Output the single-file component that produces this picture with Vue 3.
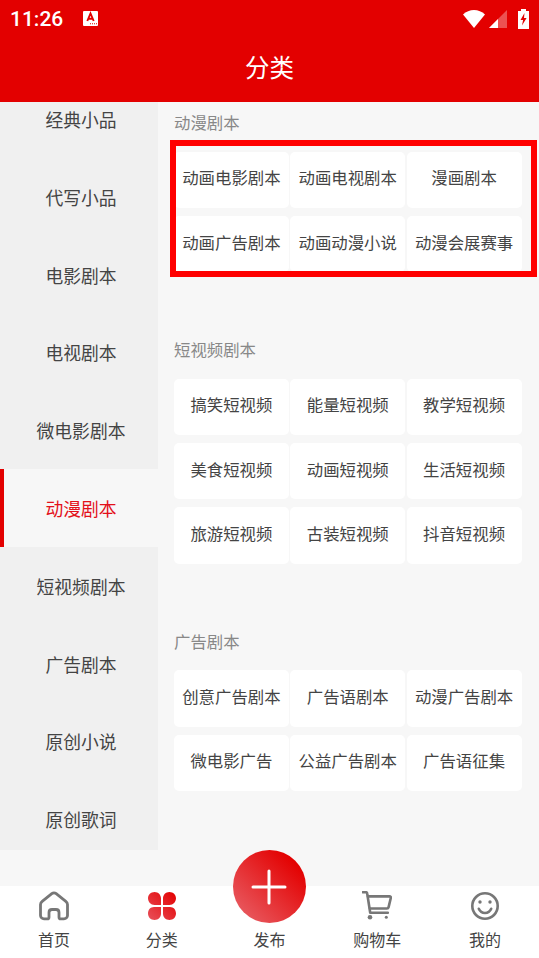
<script setup>
const menus = ["经典小品", "代写小品", "电影剧本", "电视剧本", "微电影剧本", "动漫剧本", "短视频剧本", "广告剧本", "原创小说", "原创歌词"];
const activeMenu = "动漫剧本";

const sections = [
  { title: "动漫剧本", items: ["动画电影剧本", "动画电视剧本", "漫画剧本", "动画广告剧本", "动画动漫小说", "动漫会展赛事"] },
  { title: "短视频剧本", items: ["搞笑短视频", "能量短视频", "教学短视频", "美食短视频", "动画短视频", "生活短视频", "旅游短视频", "古装短视频", "抖音短视频"] },
  { title: "广告剧本", items: ["创意广告剧本", "广告语剧本", "动漫广告剧本", "微电影广告", "公益广告剧本", "广告语征集"] },
];
</script>

<template>
  <div class="page">
    <header class="top">
      <div class="status">
        <span class="time">11:26</span>
        <svg class="notice" width="15" height="15" viewBox="0 0 15 15">
          <rect width="15" height="15" rx="1" fill="#fff" />
          <path d="M4.300 10 7.500 2.500 10.700 10M5.400 7.800H9.600" fill="none" stroke="#e30000" stroke-width="1.900" />
          <path d="M7 12.700h7" stroke="#e30000" stroke-width="1.100" stroke-dasharray="1 1" />
        </svg>
        <span class="status-right">
          <svg width="22" height="18" viewBox="0 0 22 18"><path d="M0 4.500C3 1.600 7 0 11 0s8 1.600 11 4.500L11 18z" fill="#fff" /></svg>
          <svg class="signal" width="18" height="18" viewBox="0 0 18 18">
            <path d="M0 18 18 0v18z" fill="#fff" fill-opacity=".32" />
            <path d="M0 18 9 9v9z" fill="#fff" />
          </svg>
          <svg class="battery" width="11" height="20" viewBox="0 0 11 20">
            <path d="M3 0h5v2h3v18H0V2h3z" fill="#fff" />
            <path d="M6.500 4 2.500 11h2.600L4 16.500 8.600 9H6z" fill="#e30000" />
          </svg>
        </span>
      </div>
      <h1 class="title">分类</h1>
    </header>

    <main class="body">
      <aside class="side">
        <ul class="menu">
          <li v-for="m in menus" :key="m" class="menu-item" :class="{ active: m === activeMenu }">{{ m }}</li>
        </ul>
      </aside>
      <section class="content">
        <div v-for="s in sections" :key="s.title" class="group">
          <h2 class="group-title">{{ s.title }}</h2>
          <div class="cards">
            <div v-for="item in s.items" :key="item" class="card">{{ item }}</div>
          </div>
        </div>
        <div class="mark"></div>
      </section>
    </main>

    <nav class="tabs">
      <div class="tab">
        <svg width="30" height="30" viewBox="0 0 30 30" fill="none" stroke="#777" stroke-width="2.800" stroke-linejoin="round">
          <path d="M12.800 2.700 3.200 10.300c-1 .8-1.700 2-1.700 3.300v10.800c0 1.900 1.600 3.500 3.500 3.500h3.300c1 0 1.700-.7 1.700-1.700v-4.700c0-1.700 1.300-3 3-3h4c1.700 0 3 1.300 3 3v4.700c0 1 .7 1.700 1.700 1.700H25c1.900 0 3.500-1.600 3.500-3.500V13.600c0-1.300-.7-2.500-1.700-3.300l-9.600-7.600c-1.300-1-3.100-1-4.400 0z" />
        </svg>
        <span>首页</span>
      </div>
      <div class="tab">
        <svg width="30" height="30" viewBox="0 0 30 30">
          <defs>
            <linearGradient id="clover" x1="1" y1="0" x2="0" y2="1">
              <stop offset="0" stop-color="#e30000" />
              <stop offset="1" stop-color="#e8505a" />
            </linearGradient>
          </defs>
          <path fill="url(#clover)" d="M7.600 1C3.800 1 1 3.800 1 7.300 1 11 3.800 14 7.600 14H14V7.400C14 3.800 11.200 1 7.600 1zM22.400 1C26.200 1 29 3.800 29 7.300 29 11 26.200 14 22.400 14H16V7.400C16 3.800 18.800 1 22.400 1zM7 16h7v6.800c0 3.600-2.800 6.200-6.400 6.200C3.800 29 1 26.200 1 22.500 1 18.800 3.400 16 7 16zM16 16h7c3.600 0 6 2.800 6 6.500 0 3.700-2.800 6.500-6.600 6.500-3.600 0-6.400-2.600-6.400-6.200z" />
        </svg>
        <span>分类</span>
      </div>
      <div class="tab publish">
        <div class="fab">
          <svg width="36" height="36" viewBox="0 0 36 36"><path d="M18 2v32M2 18h32" stroke="#fff" stroke-width="3" stroke-linecap="round" /></svg>
        </div>
        <span>发布</span>
      </div>
      <div class="tab">
        <svg width="30" height="30" viewBox="0 0 30 30" fill="none" stroke="#777" stroke-width="2.600" stroke-linecap="round" stroke-linejoin="round">
          <path d="M1 1.200h2.700c.8 0 1.400.5 1.500 1.300l3 19.300h17.600" />
          <path d="M6 5.400h21.500c1 0 1.500.7 1.300 1.600l-2.200 9.100c-.2.900-.9 1.400-1.700 1.400H8" />
          <circle cx="8" cy="26.300" r="2.300" fill="#777" stroke="none" />
          <circle cx="24.300" cy="26.300" r="1.500" fill="#777" stroke="none" />
        </svg>
        <span>购物车</span>
      </div>
      <div class="tab">
        <svg width="30" height="30" viewBox="0 0 30 30" fill="none" stroke="#777" stroke-width="2.600" stroke-linecap="round">
          <circle cx="15" cy="15" r="12.700" />
          <path d="M8.800 17.800c1.200 2.800 3.400 4.200 6.200 4.200s5-1.400 6.200-4.200" />
          <circle cx="10" cy="11" r="1.700" fill="#777" stroke="none" />
          <circle cx="20" cy="11" r="1.700" fill="#777" stroke="none" />
        </svg>
        <span>我的</span>
      </div>
    </nav>
  </div>
</template>

<style>
html,
body {
  margin: 0;
  padding: 0;
}
</style>

<style scoped>
.page {
  width: 539px;
  height: 958px;
  display: flex;
  flex-direction: column;
  overflow: hidden;
  background: #f7f7f7;
  font-family: "Noto Sans CJK SC", "Noto Sans", sans-serif;
}

.top {
  height: 102px;
  background: #e30000;
  color: #fff;
  flex: none;
}

.status {
  height: 34px;
  display: flex;
  align-items: center;
  padding: 3px 9px 0 10px;
  box-sizing: border-box;
}

.time {
  font-family: Roboto, sans-serif;
  font-size: 21px;
  font-weight: 500;
  width: 73px;
}

.status-right {
  margin-left: auto;
  display: flex;
  align-items: center;
  margin-right: 1px;
}

.signal {
  margin: 0 11px 0 4px;
}

.title {
  margin: 0;
  height: 68px;
  line-height: 66px;
  text-align: center;
  font-size: 24.5px;
  font-weight: 400;
}

.body {
  flex: 1;
  display: flex;
  min-height: 0;
}

.side {
  width: 158px;
  height: 748px;
  flex: none;
  overflow: hidden;
}

.menu {
  list-style: none;
  margin: -22px 0 0;
  padding: 0;
}

.menu-item {
  height: 77.8px;
  line-height: 79px;
  text-align: center;
  font-size: 17.8px;
  color: #444;
  background: #f0f0f0;
  border-left: 4px solid transparent;
  box-sizing: border-box;
}

.menu-item.active {
  color: #e3101a;
  background: #f7f7f7;
  border-left-color: #e30000;
}

.content {
  flex: 1;
  position: relative;
  padding: 0 17.5px 0 16px;
}

.group {
  margin-bottom: 56.9px;
}

.group-title {
  margin: 0;
  height: 49.5px;
  line-height: 40px;
  font-size: 16.4px;
  font-weight: 400;
  color: #888;
}

.cards {
  display: grid;
  grid-template-columns: repeat(3, 1fr);
  grid-auto-rows: 56.4px;
  gap: 8px 1.5px;
}

.card {
  display: flex;
  align-items: center;
  justify-content: center;
  background: #fff;
  border-radius: 5px;
  padding-bottom: 5px;
  box-sizing: border-box;
  font-size: 16.4px;
  color: #444;
  white-space: nowrap;
}

.mark {
  position: absolute;
  left: 12px;
  top: 38px;
  width: 367px;
  height: 137px;
  border: 6px solid #f00;
  box-sizing: border-box;
}

.tabs {
  height: 72px;
  flex: none;
  background: #fff;
  display: grid;
  grid-template-columns: repeat(5, 1fr);
}

.tab {
  position: relative;
  display: flex;
  flex-direction: column;
  align-items: center;
  padding-top: 5px;
  font-size: 16px;
  line-height: 24px;
  color: #444;
}

.tab svg {
  display: block;
}

.tab span {
  margin-top: 6px;
}

.publish span {
  margin-top: 36px;
}

.fab {
  position: absolute;
  left: 50%;
  top: -36px;
  width: 73px;
  height: 73px;
  margin-left: -36.5px;
  border-radius: 50%;
  background: linear-gradient(to bottom left, #e30000 15%, #e85a60 90%);
  display: flex;
  align-items: center;
  justify-content: center;
}
</style>
